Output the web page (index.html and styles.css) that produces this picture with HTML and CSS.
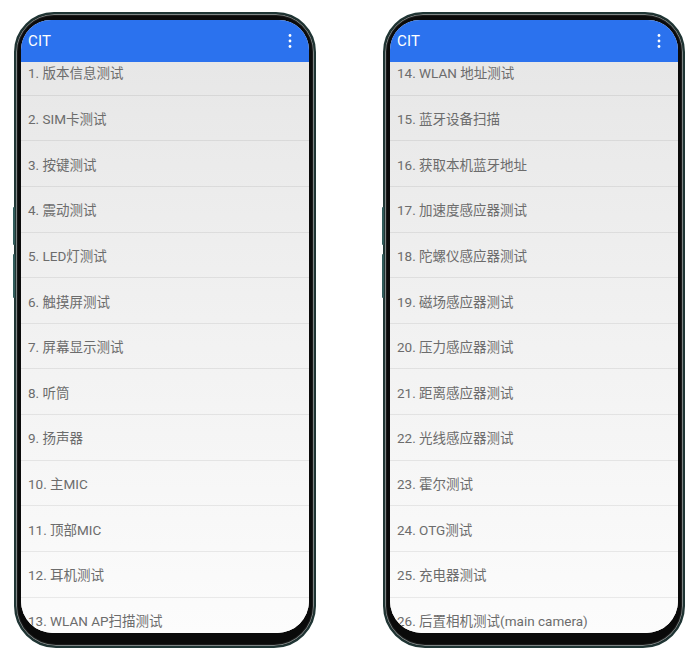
FILE: index.html
```html
<!DOCTYPE html>
<html lang="zh-CN">
<head>
<meta charset="utf-8">
<title>CIT</title>
<link rel="stylesheet" href="styles.css">
</head>
<body>
<div class="stage">
  <div class="phone">
    <span class="btn btn-a"></span>
    <span class="btn btn-b"></span>
    <div class="screen">
      <div class="appbar">
        <span class="title">CIT</span>
        <svg class="kebab" width="6" height="16" viewBox="0 0 6 16"><circle cx="3" cy="2.5" r="1.4" fill="#fff"/><circle cx="3" cy="8" r="1.4" fill="#fff"/><circle cx="3" cy="13.5" r="1.4" fill="#fff"/></svg>
      </div>
      <div class="listwrap">
        <ul class="list">
          <li>1. 版本信息测试</li>
          <li>2. SIM卡测试</li>
          <li>3. 按键测试</li>
          <li>4. 震动测试</li>
          <li>5. LED灯测试</li>
          <li>6. 触摸屏测试</li>
          <li>7. 屏幕显示测试</li>
          <li>8. 听筒</li>
          <li>9. 扬声器</li>
          <li>10. 主MIC</li>
          <li>11. 顶部MIC</li>
          <li>12. 耳机测试</li>
          <li>13. WLAN AP扫描测试</li>
        </ul>
      </div>
    </div>
  </div>
  <div class="phone">
    <span class="btn btn-a"></span>
    <span class="btn btn-b"></span>
    <div class="screen">
      <div class="appbar">
        <span class="title">CIT</span>
        <svg class="kebab" width="6" height="16" viewBox="0 0 6 16"><circle cx="3" cy="2.5" r="1.4" fill="#fff"/><circle cx="3" cy="8" r="1.4" fill="#fff"/><circle cx="3" cy="13.5" r="1.4" fill="#fff"/></svg>
      </div>
      <div class="listwrap">
        <ul class="list">
          <li>14. WLAN 地址测试</li>
          <li>15. 蓝牙设备扫描</li>
          <li>16. 获取本机蓝牙地址</li>
          <li>17. 加速度感应器测试</li>
          <li>18. 陀螺仪感应器测试</li>
          <li>19. 磁场感应器测试</li>
          <li>20. 压力感应器测试</li>
          <li>21. 距离感应器测试</li>
          <li>22. 光线感应器测试</li>
          <li>23. 霍尔测试</li>
          <li>24. OTG测试</li>
          <li>25. 充电器测试</li>
          <li>26. 后置相机测试(main camera)</li>
        </ul>
      </div>
    </div>
  </div>
</div>
</body>
</html>
```
FILE: styles.css
```css
html, body {
  margin: 0;
  padding: 0;
  background: #ffffff;
}
body {
  width: 700px;
  height: 665px;
  overflow: hidden;
  font-family: Roboto, "Noto Sans CJK SC", sans-serif;
}
.stage {
  display: flex;
  gap: 67px;
  padding: 12px 0 0 14px;
}
.phone {
  position: relative;
  width: 288px;
  height: 613px;
  padding: 6px 5px 13px 5px;
  border: 2px solid #1f3534;
  border-radius: 40px 40px 42px 42px;
  background: #0a0a0a;
  box-shadow: inset 0 0 0 1px #7d8484, inset 0 0 0 2px #1a1a1a;
}
.btn {
  position: absolute;
  left: -3px;
  width: 2px;
  background: #2f5a5a;
  border-radius: 1px;
}
.btn-a { top: 193px; height: 38px; }
.btn-b { top: 240px; height: 44px; }
.screen {
  display: flex;
  flex-direction: column;
  width: 288px;
  height: 613px;
  border-radius: 30px 30px 32px 32px;
  overflow: hidden;
  background: #fdfdfd;
}
.appbar {
  position: relative;
  z-index: 1;
  flex: none;
  height: 42px;
  display: flex;
  align-items: center;
  justify-content: space-between;
  padding: 0 16px 0 7px;
  background: #2b72ee;
}
.title {
  color: #ffffff;
  font-size: 15px;
  letter-spacing: 0.2px;
}
.kebab {
  display: block;
}
.listwrap {
  flex: 1;
  overflow: hidden;
  background: linear-gradient(#e7e7e7 0%, #f1f1f1 45%, #fcfcfc 100%);
}
.list {
  list-style: none;
  margin: -12px 0 0 0;
  padding: 0;
}
.list li {
  box-sizing: border-box;
  height: 45.65px;
  display: flex;
  align-items: center;
  padding-left: 7px;
  border-bottom: 1px solid rgba(0, 0, 0, 0.07);
  color: #6c6c6c;
  font-size: 13.5px;
  white-space: nowrap;
}
```
